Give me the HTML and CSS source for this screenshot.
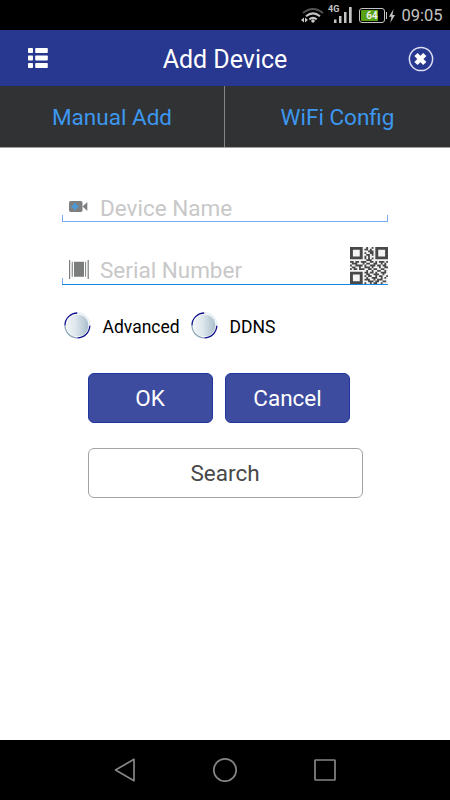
FILE: index.html
```html
<!DOCTYPE html>
<html lang="en">
<head>
<meta charset="utf-8">
<title>Add Device</title>
<link rel="stylesheet" href="styles.css">
</head>
<body>
<div class="screen">
  <div class="status">
    <svg class="wifi" width="24" height="18" viewBox="0 0 24 18" fill="none" stroke-width="2">
      <path d="M2 6Q12-2 22 6" stroke="#555"/>
      <path d="M5 9.2Q12 3.5 19 9.2M8.3 12.4Q12 9.4 15.7 12.4" stroke="#c4c4c4"/>
      <circle cx="12" cy="14" r="1.8" fill="#c4c4c4"/>
      <path d="M0 13l3-2.6v5.2zM7 13l-3-2.6v5.2z" fill="#c4c4c4"/>
    </svg>
    <span class="net">4G</span>
    <svg class="signal" width="18" height="16" viewBox="0 0 18 16" fill="#c4c4c4"><path d="M0 12.5h2.5V16H0zM5 9h2.5v7H5zM10 5h2.5v11H10zM15 0h2.7v16H15z"/></svg>
    <div class="battery"><span>64</span></div>
    <svg class="bolt" width="6" height="14" viewBox="0 0 6 14" fill="#c4c4c4"><path d="M4.6 0L0 7.7h2.5L1.2 14 6 6H3.4z"/></svg>
    <span class="clock">09:05</span>
  </div>
  <header class="bar">
    <svg class="list" width="20" height="20" viewBox="0 0 20 20" fill="#fff"><rect y="0" width="5" height="5" rx=".8"/><rect x="7.2" y="0" width="12.6" height="5" rx=".8"/><rect y="7.5" width="5" height="5" rx=".8"/><rect x="7.2" y="7.5" width="12.6" height="5" rx=".8"/><rect y="15" width="5" height="5" rx=".8"/><rect x="7.2" y="15" width="12.6" height="5" rx=".8"/></svg>
    <h1>Add Device</h1>
    <svg class="close" width="26" height="26" viewBox="0 0 26 26"><circle cx="13" cy="13" r="11.6" fill="none" stroke="#dde0f2" stroke-width="1.5"/><path d="M8 8.5l8.8 9M16.8 8.5l-8.8 9" stroke="#fff" stroke-width="4.6"/></svg>
  </header>
  <nav class="tabs"><a>Manual Add</a><a>WiFi Config</a></nav>
  <main>
    <div class="field name">
      <svg width="20" height="12" viewBox="0 0 20 12"><rect width="13.5" height="11" rx="1.8" fill="#7d7f80"/><path d="M13.5 5.5L18.3 1v9z" fill="#7d7f80"/><path d="M6 2.2v6.6M2.7 5.5h6.6" stroke="#489bdc" stroke-width="2.6"/></svg>
      <span>Device Name</span>
    </div>
    <div class="field serial">
      <svg width="20" height="19" viewBox="0 0 20 19" fill="#7b7d7c"><path d="M0 0h1.2v19H0zM18.6 0h1.2v19h-1.2zM2.7 1.8h1.1v15H2.7zM5 1.8h10v15H5zM16.1 1.8h1v15h-1z"/></svg>
      <span>Serial Number</span>
      <svg class="qr" width="38" height="37" viewBox="0 0 21 21" preserveAspectRatio="none"><rect width="21" height="21" fill="#f4f4f4"/>
        <g fill="none" stroke="#484848">
          <path stroke-width="1.6" d="M.8.8h5.4v5.4H.8zM14.8.8h5.4v5.4h-5.4zM.8 14.8h5.4v5.4H.8z"/>
          <path d="M9 .5h1M12 .5h1M8 1.5h2M11 1.5h1M10 2.5h3M8 3.5h1M11 3.5h2M9 4.5h2M12 4.5h1M8 5.5h1M10 5.5h1M8 6.5h1M10 6.5h1M12 6.5h1M9 7.5h3M0 8.5h2M3 8.5h2M6 8.5h3M11 8.5h2M14 8.5h1M16 8.5h3M20 8.5h1M1 9.5h3M7 9.5h1M9 9.5h2M13 9.5h2M17 9.5h1M19 9.5h1M0 10.5h1M3 10.5h4M8 10.5h1M11 10.5h3M15 10.5h2M18 10.5h2M1 11.5h2M5 11.5h1M8 11.5h3M12 11.5h1M16 11.5h1M19 11.5h2M0 12.5h1M2 12.5h2M5 12.5h3M10 12.5h2M13 12.5h2M17 12.5h2M9 13.5h1M12 13.5h1M15 13.5h2M19 13.5h1M8 14.5h2M11 14.5h2M14 14.5h1M17 14.5h3M9 15.5h2M13 15.5h3M18 15.5h1M8 16.5h1M10 16.5h2M14 16.5h1M16 16.5h2M20 16.5h1M9 17.5h1M12 17.5h3M17 17.5h1M19 17.5h1M8 18.5h3M13 18.5h1M15 18.5h3M10 19.5h3M14 19.5h2M18 19.5h2M8 20.5h1M11 20.5h1M13 20.5h2M17 20.5h1"/>
        </g></svg>
    </div>
    <div class="options">
      <label><svg width="27" height="27" viewBox="0 0 27 27"><defs><linearGradient id="ball"><stop stop-color="#f0f5f7"/><stop offset=".4" stop-color="#dfe8ed"/><stop offset="1" stop-color="#a9bfcb"/></linearGradient></defs><circle cx="13.4" cy="13.4" r="11" fill="url(#ball)"/><g fill="none" stroke-width="1.3"><path d="M1 13.5A12.4 12.4 0 0 1 13.4 1" stroke="#10108c"/><path d="M25.8 13.5A12.4 12.4 0 0 1 13.4 25.8" stroke="#10108c"/><path d="M1 13.5A12.4 12.4 0 0 0 13.4 25.8" stroke="#8aa6b6"/><path d="M13.4 1A12.4 12.4 0 0 1 25.8 13.5" stroke="#e3edf2"/></g></svg><span>Advanced</span></label>
      <label><svg width="27" height="27" viewBox="0 0 27 27"><circle cx="13.4" cy="13.4" r="11" fill="url(#ball)"/><g fill="none" stroke-width="1.3"><path d="M1 13.5A12.4 12.4 0 0 1 13.4 1" stroke="#10108c"/><path d="M25.8 13.5A12.4 12.4 0 0 1 13.4 25.8" stroke="#10108c"/><path d="M1 13.5A12.4 12.4 0 0 0 13.4 25.8" stroke="#8aa6b6"/><path d="M13.4 1A12.4 12.4 0 0 1 25.8 13.5" stroke="#e3edf2"/></g></svg><span>DDNS</span></label>
    </div>
    <div class="buttons"><button class="primary">OK</button><button class="primary">Cancel</button></div>
    <button class="search">Search</button>
  </main>
  <footer class="softkeys">
    <svg width="250" height="60" viewBox="0 0 250 60" fill="none" stroke="#858585" stroke-width="1.7" stroke-linejoin="round"><path d="M15.5 30L34 19.3v21.4z"/><circle cx="125" cy="30" r="11.2"/><rect x="215" y="20" width="20" height="20" rx=".6"/></svg>
  </footer>
</div>
</body>
</html>
```

FILE: styles.css
```css
* { box-sizing: border-box; }
body { margin: 0; font-family: Roboto, sans-serif; background: #fff; }
.screen { width: 450px; height: 800px; display: flex; flex-direction: column; overflow: hidden; }
.status { height: 30px; background: #000; color: #c4c4c4; display: flex; align-items: flex-start; padding-left: 301px; }
.wifi { margin-top: 7px; flex: none; }
.net { font-size: 9px; font-weight: 700; line-height: 10px; margin: 4px 0 0 3px; width: 6px; white-space: nowrap; }
.signal { margin-top: 7px; flex: none; }
.battery { margin: 8px 0 0 7px; width: 26px; height: 15px; border: 1.5px solid #c4c4c4; border-radius: 3px; padding: 1px; background: linear-gradient(90deg, #58a014 17px, #000 17px) content-box; position: relative; flex: none; }
.battery::after { content: ""; position: absolute; right: -3px; top: 3px; width: 1px; height: 7px; background: #c4c4c4; }
.battery span { display: block; font-size: 10px; font-weight: 700; line-height: 11px; text-align: center; color: #eee; }
.bolt { margin: 9px 0 0 4px; flex: none; }
.clock { font-size: 16.5px; line-height: 20px; margin: 6px 0 0 6.5px; }
.bar { height: 56px; background: #28378f; display: grid; grid-template-columns: 50px 1fr 50px; align-items: center; }
.list { margin-left: 28px; }
.close { margin: 2px 0 0 8.3px; }
h1 { margin: 3px 0 0; text-align: center; font-size: 25px; font-weight: 400; line-height: 32px; color: #fff; }
.tabs { height: 61.5px; background: #303234; display: flex; border-bottom: 1px solid #a0a0a0; }
.tabs a { flex: 0 0 224px; text-align: center; font-size: 22.5px; line-height: 62px; color: #3d97ef; }
.tabs a + a { flex-basis: 226px; border-left: 1px solid #858585; }
main { flex: 1; display: flex; flex-direction: column; }
.field { margin-left: 62px; width: 326px; display: flex; align-items: center; color: #c8c8c8; font-size: 22.5px; line-height: 28px; background: linear-gradient(#77aaf0, #77aaf0) left bottom / 1px 6px no-repeat, linear-gradient(#77aaf0, #77aaf0) right bottom / 1px 6px no-repeat; border-bottom: 1px solid #77aaf0; padding-left: 7px; }
.field svg { flex: none; }
.field span { margin-left: 11px; }
.name { margin-top: 46.5px; height: 28px; }
.name svg { margin-top: -1px; }
.serial { margin-top: 24px; height: 39px; border-bottom-color: #1687dc; }
.serial > svg:first-child { margin-top: 9px; }
.serial span { margin-top: 10px; }
.field .qr { margin-left: auto; }
.options { display: flex; margin: 25.5px 0 0 64px; }
.options label { display: flex; align-items: center; width: 127px; font-size: 17.5px; line-height: 27px; color: #000; }
.options span { margin: 3px 0 0 11.5px; }
.buttons { display: flex; gap: 12.5px; margin: 32px 0 0 87.5px; }
button { font-family: inherit; font-size: 22.5px; padding: 0; }
.primary { width: 125px; height: 50px; padding-top: 1px; color: #fff; background: #3d4c9e; border: 1px solid #2036a0; border-radius: 6px; }
.search { width: 275px; height: 50px; margin: 25px 0 0 87.5px; padding-top: 1px; color: #484848; background: #fff; border: 1px solid #a3a3a3; border-radius: 6px; }
.softkeys { height: 60px; background: #000; display: flex; justify-content: center; }
```
